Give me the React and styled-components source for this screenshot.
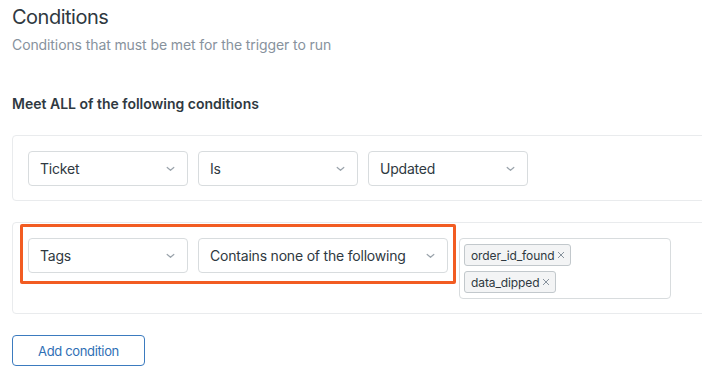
import React from "react";
import styled, { createGlobalStyle } from "styled-components";

const Global = createGlobalStyle`
  html, body { margin: 0; padding: 0; background: #fff; overflow: hidden; }
  body { font-family: Inter, "Noto Sans", sans-serif; color: #2f3941; }
`;

const Page = styled.div`
  padding: 5px 0 0 12px;
  width: 702px;
  box-sizing: border-box;
`;

const Title = styled.h1`
  margin: 0;
  font-size: 20px;
  line-height: 24px;
  font-weight: 400;
  letter-spacing: -0.5px;
  color: #2f3941;
`;

const Subtitle = styled.p`
  margin: 6px 0 0;
  font-size: 14px;
  line-height: 20px;
  letter-spacing: -0.1px;
  color: #87929d;
`;

const SectionLabel = styled.h2`
  margin: 39px 0 0;
  font-size: 14px;
  line-height: 20px;
  font-weight: 600;
  color: #2f3941;
`;

const Card = styled.div`
  position: relative;
  margin-top: ${(p) => p.$mt}px;
  margin-right: -20px;
  border: 1px solid #e9ebed;
  border-radius: 4px;
  padding: 15px 15px 14px;
  display: flex;
  align-items: flex-start;
  gap: 10px;
`;

const SelectBox = styled.div`
  box-sizing: border-box;
  width: ${(p) => p.$w}px;
  height: 35px;
  border: 1px solid #d8dcde;
  border-radius: 4px;
  padding: 0 12px 0 11px;
  display: flex;
  align-items: center;
  justify-content: space-between;
  font-size: 14px;
  letter-spacing: -0.2px;
  color: #2f3941;
  background: #fff;
`;

const Chevron = () => (
  <svg width="9" height="6" viewBox="0 0 9 6" fill="none">
    <path d="M1.2 1.5 L4.5 4.3 L7.8 1.5" stroke="#9aa3ab" strokeWidth="1.2" strokeLinecap="round" strokeLinejoin="round" />
  </svg>
);

const TagsBox = styled.div`
  box-sizing: border-box;
  width: 212px;
  margin-left: 1px;
  border: 1px solid #d8dcde;
  border-radius: 4px;
  padding: 5px 4px 5px 4px;
  display: flex;
  flex-direction: column;
  align-items: flex-start;
  gap: 5px;
`;

const Chip = styled.span`
  box-sizing: border-box;
  height: 22px;
  display: inline-flex;
  align-items: center;
  gap: 3px;
  padding: 0 5px 0 6px;
  border: 1px solid #c2c8cc;
  border-radius: 3px;
  background: #f3f4f5;
  font-size: 12px;
  letter-spacing: -0.1px;
  color: #2f3941;
`;

const Cross = () => (
  <svg width="8" height="8" viewBox="0 0 8 8">
    <path d="M1 1 L7 7 M7 1 L1 7" stroke="#87929d" strokeWidth="1" />
  </svg>
);

const Highlight = styled.div`
  position: absolute;
  left: 7px;
  top: 1px;
  width: 436px;
  height: 60px;
  box-sizing: border-box;
  border: 3px solid #f25c22;
  border-radius: 2px;
  pointer-events: none;
`;

const AddButton = styled.button`
  margin-top: 21px;
  width: 133px;
  height: 31px;
  box-sizing: border-box;
  border: 1px solid #3b7bbf;
  border-radius: 4px;
  background: #fff;
  color: #2f6fb5;
  font-family: inherit;
  font-size: 13px;
  letter-spacing: -0.35px;
  cursor: pointer;
`;

const Select = ({ w, children }) => (
  <SelectBox $w={w}>
    <span>{children}</span>
    <Chevron />
  </SelectBox>
);

export default function App() {
  return (
    <>
      <Global />
      <Page>
        <Title>Conditions</Title>
        <Subtitle>Conditions that must be met for the trigger to run</Subtitle>
        <SectionLabel>Meet ALL of the following conditions</SectionLabel>
        <Card $mt={21}>
          <Select w={160}>Ticket</Select>
          <Select w={160}>Is</Select>
          <Select w={160}>Updated</Select>
        </Card>
        <Card $mt={21}>
          <Highlight />
          <Select w={160}>Tags</Select>
          <Select w={250}>Contains none of the following</Select>
          <TagsBox>
            <Chip>order_id_found <Cross /></Chip>
            <Chip>data_dipped <Cross /></Chip>
          </TagsBox>
        </Card>
        <AddButton>Add condition</AddButton>
      </Page>
    </>
  );
}
